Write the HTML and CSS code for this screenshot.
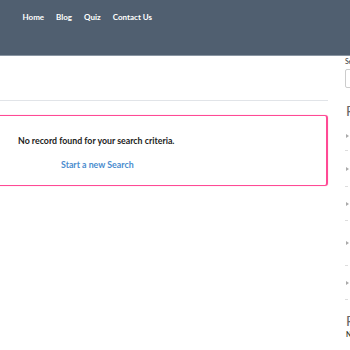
FILE: index.html
```html
<!DOCTYPE html>
<html lang="en">
<head>
    <meta charset="UTF-8">
    <meta name="viewport" content="width=device-width, initial-scale=1.0">
    <title>Search Results</title>
    <link rel="stylesheet" href="styles.css">
</head>
<body>
    <header class="site-header">
        <nav class="main-nav">
            <a href="#">Home</a>
            <a href="#">Blog</a>
            <a href="#">Quiz</a>
            <a href="#">Contact Us</a>
        </nav>
    </header>
    <div class="page">
        <main class="content">
            <div class="content-top"></div>
            <div class="no-results">
                <p class="no-results-text">No record found for your search criteria.</p>
                <a class="new-search" href="#">Start a new Search</a>
            </div>
        </main>
        <aside class="sidebar">
            <label class="search-label" for="q">Search</label>
            <input class="search-input" id="q" type="text">
            <h3 class="widget-title">Featured Categories</h3>
            <ul class="cat-list">
                <li>Sports</li>
                <li class="mid">History</li>
                <li>Geography</li>
                <li class="tall">General Knowledge</li>
                <li>Movies</li>
            </ul>
            <h3 class="widget-title second">Follow Us</h3>
            <p class="small-note">Newsletter</p>
        </aside>
    </div>
</body>
</html>
```

FILE: styles.css
```css
/* General Styles */
body {
    margin: 0;
    font-family: 'Lato', 'Open Sans', sans-serif;
    background: #fff;
    color: #222;
    overflow: hidden;
}

/* Header Styles */
.site-header {
    height: 55px;
    background-color: #505f70;
    border-bottom: 1px solid #8995a2;
}

.main-nav {
    display: flex;
    padding: 12px 0 0 16.5px;
}

.main-nav a {
    padding: 0 6px;
    font-size: 8px;
    font-weight: bold;
    color: #fff;
    text-decoration: none;
    line-height: 10px;
}

/* Layout */
.page {
    display: flex;
}

.content {
    flex: 0 0 328px;
}

.content-top {
    height: 44px;
    border-bottom: 1px solid #e1e4e8;
}

/* No results box */
.no-results {
    margin: 14px 0 0 -10px;
    height: 69px;
    border: 1px solid #ff4a95;
    border-right-width: 2px;
    border-radius: 3px;
    box-shadow: 0 0 1px #ff8fbb;
}

.no-results-text {
    margin: 19px 0 0 27px;
    font-size: 8.8px;
    font-weight: bold;
    line-height: 12px;
    white-space: nowrap;
}

.new-search {
    display: inline-block;
    margin: 12px 0 0 70px;
    font-size: 8.8px;
    font-weight: bold;
    line-height: 12px;
    color: #4a8cce;
    text-decoration: none;
}

/* Sidebar */
.sidebar {
    flex: 0 0 200px;
    margin-left: 17px;
}

.search-label {
    display: block;
    font-size: 7px;
    line-height: 10px;
    color: #333;
}

.search-input {
    display: block;
    box-sizing: border-box;
    width: 180px;
    height: 19px;
    margin-top: 3px;
    border: 1px solid #ccc;
    border-radius: 2px;
}

.widget-title {
    margin: 15px 0 0 1px;
    font-size: 14px;
    font-weight: normal;
    line-height: 16px;
    color: #666;
}

.cat-list {
    list-style: none;
    margin: 0;
    padding: 0;
}

.cat-list li {
    position: relative;
    padding: 14px 0 11px 12px;
    border-bottom: 1px dashed #ddd;
    font-size: 8px;
    line-height: 8px;
    color: #888;
}

.cat-list li::before {
    content: "";
    position: absolute;
    left: 1px;
    top: 15px;
    border-left: 3px solid #aaa;
    border-top: 2px solid transparent;
    border-bottom: 2px solid transparent;
}

.cat-list li:first-child {
    padding: 13px 0 10px 12px;
}

.cat-list li.mid {
    padding: 14px 0 13px 12px;
}

.cat-list li.mid::before {
    top: 16px;
}

.cat-list li.tall {
    padding: 19px 0 17px 12px;
}

.cat-list li.tall::before {
    top: 20px;
}

.widget-title.second {
    margin-top: 13px;
}

.small-note {
    margin: 1px 0 0 1px;
    font-size: 7px;
    font-weight: bold;
    color: #333;
}
```
